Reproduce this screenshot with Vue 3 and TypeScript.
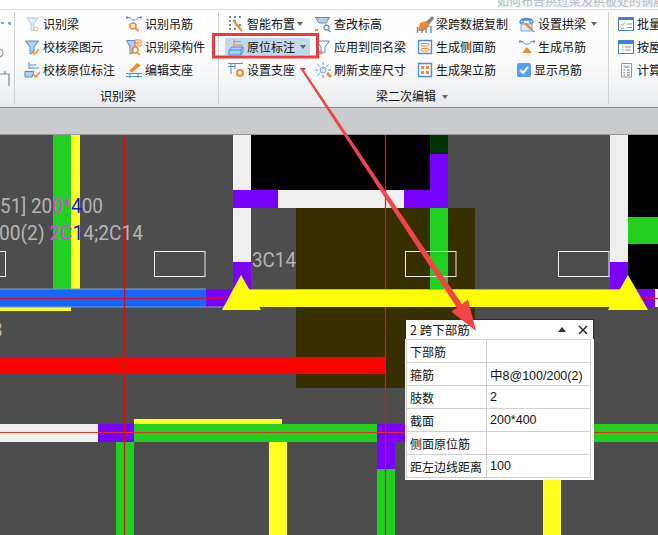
<template>
  <div class="app">
    <div class="top-strip">
      <span class="top-tip">如何布告拱过梁及拱板处的钢筋 ？</span>
    </div>

    <div class="ribbon">
      <div class="group group-cut">
        <svg class="cut-icon" width="13" height="74" viewBox="0 0 13 74">
          <path d="M1 7H4M8 7H10V9" fill="none" stroke="#4a8fd8" stroke-width="1.5" />
          <circle cx="-1" cy="37" r="4" fill="none" stroke="#9a9a9a" stroke-width="1.2" />
          <path d="M0 58H9V70M5 55V58" fill="none" stroke="#7a8a9a" stroke-width="1.2" />
        </svg>
      </div>

      <div class="group group-one">
        <div class="grid">
          <div v-for="item in groupOne" :key="item.label" class="item">
            <svg class="icon" width="16" height="16" viewBox="0 0 16 16">
              <path v-for="(p, i) in icons[item.icon]" :key="i" :d="p.d" :fill="p.f ?? 'none'" :stroke="p.s ?? 'none'" :stroke-width="p.w ?? 1" />
            </svg>
            <span>{{ item.label }}</span>
          </div>
        </div>
        <div class="group-label">识别梁</div>
      </div>

      <div class="group group-two">
        <div class="grid">
          <div
            v-for="item in groupTwo"
            :key="item.label"
            class="item"
            :class="{ active: item.active, compact: item.icon === 'checked' }"
          >
            <svg v-if="item.icon === 'checked'" class="icon" width="14" height="16" viewBox="0 0 14 16">
              <rect x="0" y="1" width="14" height="14" rx="2" fill="#55a0f5" />
              <path d="M3 8L6 11L11 5" fill="none" stroke="#fff" stroke-width="2" />
            </svg>
            <svg v-else class="icon" width="16" height="16" viewBox="0 0 16 16">
              <path v-for="(p, i) in icons[item.icon]" :key="i" :d="p.d" :fill="p.f ?? 'none'" :stroke="p.s ?? 'none'" :stroke-width="p.w ?? 1" />
            </svg>
            <span>{{ item.label }}</span>
            <i v-if="item.caret" class="caret"></i>
          </div>
        </div>
        <div class="group-label">梁二次编辑<i class="caret caret-label"></i></div>
      </div>

      <div class="group group-three">
        <div class="grid">
          <div v-for="item in groupThree" :key="item.label" class="item">
            <svg class="icon" width="16" height="16" viewBox="0 0 16 16">
              <path v-for="(p, i) in icons[item.icon]" :key="i" :d="p.d" :fill="p.f ?? 'none'" :stroke="p.s ?? 'none'" :stroke-width="p.w ?? 1" />
            </svg>
            <span>{{ item.label }}</span>
          </div>
        </div>
      </div>
    </div>

    <div class="band"></div>

    <svg class="drawing" width="658" height="400" viewBox="0 135 658 400">
      <rect
        v-for="(r, i) in members"
        :key="i"
        :x="r[0]"
        :y="r[1]"
        :width="r[2]"
        :height="r[3]"
        :fill="r[4]"
      />

      <rect v-for="x in [-45, 154.5, 405.5, 558.5]" :key="x" :x="x" y="251.5" width="50.5" height="25" fill="none" stroke="#eeeeee" stroke-width="1" />

      <path d="M0 289H206M0 307H233" stroke="#7aa0c8" stroke-width="1" />
      <path d="M0 298.5H225" stroke="#d81020" stroke-width="1.2" />
      <path d="M640 298.5H658" stroke="#e01010" stroke-width="1" />
      <path d="M0 432.5H658" stroke="#e03020" stroke-width="1" />
      <path d="M124.5 135V535" stroke="#d41010" stroke-width="1.2" />
      <path d="M385.5 135V535" stroke="#f01010" stroke-width="1.2" />

      <!-- the yellow beam sits on top of the axis lines -->
      <rect x="233" y="289" width="395" height="18" fill="#ffff00" />
      <path d="M233 289.5H628" stroke="#9fb4b8" stroke-width="1" />
      <path d="M241 275L222 310H261Z" fill="#ffff00" />
      <path d="M628 275L608 310H648Z" fill="#ffff00" />

      <text x="0" y="212.5" class="cad" textLength="103" lengthAdjust="spacingAndGlyphs">51] 20<tspan fill="#e040e0">0*</tspan><tspan fill="#1414d8">4</tspan>00</text>
      <text x="-1" y="240" class="cad" textLength="144" lengthAdjust="spacingAndGlyphs">00(2) <tspan fill="#e040e0">2C</tspan><tspan fill="#1414d8">1</tspan>4;2C14</text>
      <text x="252" y="266.5" class="cad" textLength="44" lengthAdjust="spacingAndGlyphs">3C14</text>
      <text x="-9" y="337" class="cad">3</text>
    </svg>

    <div class="popup">
      <div class="popup-title">
        <span>2 跨下部筋</span>
        <i class="popup-up"></i>
        <svg class="popup-close" width="10" height="10" viewBox="0 0 10 10">
          <path d="M1 1L9 9M9 1L1 9" stroke="#222" stroke-width="1.4" />
        </svg>
      </div>
      <table class="popup-table">
        <tbody>
          <tr v-for="row in rows" :key="row[0]">
            <td class="name">{{ row[0] }}</td>
            <td class="value">{{ row[1] }}</td>
          </tr>
        </tbody>
      </table>
    </div>

    <svg class="markup" width="658" height="535" viewBox="0 0 658 535">
      <rect x="213.5" y="34.5" width="104" height="22.5" fill="none" stroke="#ec3b3b" stroke-width="3" />
      <path d="M302 67.500L462 304.200L468 299.500L476 331L451 311.500L457 307.800L300.300 68.500Z" fill="#f24545" />
    </svg>
  </div>
</template>

<script setup lang="ts">
type Shape = { d: string; s?: string; f?: string; w?: number }
type Item = { label: string; icon: string; caret?: boolean; active?: boolean }

const BLUE = '#4a8fd8'
const ORANGE = '#f28a2e'
const PALE = '#b7cbe4'
const GREY = '#8b97a3'

const funnel = 'M1.5 2H14.5L10 8V13L6 15V8Z'
const lens = 'M9 11.5a2.5 2.5 0 1 0 5 0a2.5 2.5 0 1 0 -5 0M13 14L15.5 16'

const icons: Record<string, Shape[]> = {
  findBeam: [
    { d: 'M3 2H14L10 8V14L7 15V8Z', s: PALE, f: '#e4ecf5' },
    { d: 'M10 13a2 2 0 1 0 4 0a2 2 0 1 0 -4 0', s: '#f3b48a' },
  ],
  checkBeam: [
    { d: funnel, s: BLUE, f: PALE },
    { d: 'M8 12L10.5 15L15 10', s: ORANGE, w: 1.5 },
  ],
  checkMark: [
    { d: 'M5 0V7M5 3H12M5 6H15', s: BLUE },
    { d: 'M1 9.5H10L8 15H1Z', s: BLUE, f: '#a9cdf2' },
    { d: 'M9 12L11.5 15L16 10', s: ORANGE, w: 1.5 },
  ],
  findHanger: [
    { d: 'M0 1.5H4C4 5 12 5 12 1.5H16M1 0V3M15 0V3', s: BLUE },
    { d: 'M4 10a3 3 0 1 0 6 0a3 3 0 1 0 -6 0M9.5 12.5L13 15', s: ORANGE, w: 1.6 },
  ],
  findPart: [
    { d: 'M0.5 1.5H9V7L7 9V14L4 15V8Z', s: BLUE, f: PALE },
    { d: 'M9 1H15V7H9ZM11 3H13V5H11Z', s: ORANGE },
    { d: 'M6 11a3 3 0 1 0 6 0a3 3 0 1 0 -6 0M11 13.5L14 16', s: ORANGE, w: 1.5 },
  ],
  editSupport: [
    { d: 'M3 9L11 1L14.5 3.5L6 10.5Z', f: ORANGE },
    { d: 'M0 11.5H16M0 14.5H16M4 11V16M12 11V16', s: BLUE },
  ],
  smart: [
    { d: 'M1 1H3M6 1H8M1 5H3M6 5H8M11 1H13M1 9H3M1 13H3M6 13H8M11 9H13', s: BLUE, w: 2 },
    { d: 'M5 4L14 15', s: ORANGE, w: 2.2 },
  ],
  origin: [
    { d: 'M6 0V8M6 2.5H13M6 6H15', s: ORANGE },
    { d: 'M1 11L4 8H15L13 11ZM1 11V16H13V11M13 16L15 13V8', s: BLUE, f: '#a9cdf2' },
  ],
  support: [
    { d: 'M0 1.5H15M3 1.5V12M7 1.5V7M0 4.5H7', s: BLUE },
    { d: 'M9 11a3 3 0 1 0 6 0a3 3 0 1 0 -6 0', s: ORANGE, w: 2.2 },
  ],
  elevation: [
    { d: 'M0.5 1.5H14.5L11 7H4Z', s: BLUE, f: PALE },
    { d: lens, s: '#6b8fb5', w: 1.4 },
    { d: 'M0 14H3', s: ORANGE, w: 2 },
  ],
  sameName: [
    { d: funnel, s: BLUE, f: '#fff' },
    { d: 'M1 12H8L4.5 16Z', f: ORANGE },
  ],
  refresh: [
    { d: 'M8 0V3M8 13V16M0 8H3M13 8H16M2.5 2.5L4.5 4.5M13.5 2.5L11.5 4.5M2.5 13.5L4.5 11.5', s: BLUE },
    { d: 'M5 8a3 3 0 1 0 6 0a3 3 0 1 0 -6 0', s: '#7da7d3', f: '#dbe8f6' },
    { d: 'M12 11L16 15', s: ORANGE, w: 3 },
  ],
  copyData: [
    { d: 'M9 6L15 0L17 2L12 9Z', f: '#7f8790' },
    { d: 'M3 7L9 5L13 10L6 15H1Z', f: ORANGE },
    { d: 'M0.5 17V11M5 17V12M9 17V12M14 17V10', s: BLUE, w: 1.4 },
  ],
  sideBar: [
    { d: 'M1.5 1.5H14.5V14.5H1.5Z', s: BLUE, w: 1.4 },
    { d: 'M5 4.5H11C12.5 4.5 12.5 7 11 7H5C3.5 7 3.5 4.5 5 4.5ZM5 9.5H11C12.5 9.5 12.5 12 11 12H5C3.5 12 3.5 9.5 5 9.5Z', s: ORANGE },
  ],
  frameBar: [
    { d: 'M1.5 1.5H14.5V14.5H1.5Z', s: BLUE, w: 1.4 },
    { d: 'M4 4H7V7H4ZM9 4H12V7H9ZM4 9H7V12H4ZM9 9H12V12H9Z', f: ORANGE },
  ],
  arch: [
    { d: 'M1 7C0 1 15 1 14 7M1 7H4V4H11V7H14', s: BLUE, w: 1.5 },
    { d: 'M2 8H13V15H2Z', s: '#7da7d3', f: '#dbe8f6' },
    { d: 'M6 7L12 13', s: ORANGE, w: 2.4 },
    { d: 'M12 13L15 16', s: GREY, w: 1.4 },
  ],
  makeHanger: [
    { d: 'M0 2.5H4C4 6 12 6 12 2.5H16M1 1V4M15 1V4', s: BLUE },
    { d: 'M8 8L13 14H3Z', f: ORANGE },
  ],
  batch: [
    { d: 'M0.5 1.5H15.5V14.5H0.5Z', s: '#3f82cf', f: '#fff' },
    { d: 'M0.5 1H15.5V4H0.5Z', f: '#3f82cf' },
    { d: 'M3 8L4.5 9.5L7 6.5M3 12L4.5 13L6 11', s: ORANGE },
    { d: 'M8.5 8H14M8.5 11.5H14', s: GREY },
  ],
  byFloor: [
    { d: 'M0.5 1.5H15.5V14.5H0.5Z', s: '#3f82cf', f: '#fff' },
    { d: 'M0.5 1H15.5V5H0.5Z', f: '#3f82cf' },
    { d: 'M4 8H5.5M4 11H5.5M7 8H13M7 11H13', s: GREY },
  ],
  calc: [
    { d: 'M3.5 1.5H13.5V15H3.5Z', s: GREY, f: '#fff' },
    { d: 'M5.5 3.5H11.5V6H5.5Z', f: '#9fc1e4' },
    { d: 'M5.5 8H7M9 8H11.5M5.5 10.5H7M9 10.5H11.5M5.5 13H7M9 13H11.5', s: GREY, w: 1.4 },
  ],
}

const groupOne: Item[] = [
  { label: '识别梁', icon: 'findBeam' },
  { label: '识别吊筋', icon: 'findHanger' },
  { label: '校核梁图元', icon: 'checkBeam' },
  { label: '识别梁构件', icon: 'findPart' },
  { label: '校核原位标注', icon: 'checkMark' },
  { label: '编辑支座', icon: 'editSupport' },
]

const groupTwo: Item[] = [
  { label: '智能布置', icon: 'smart', caret: true },
  { label: '查改标高', icon: 'elevation' },
  { label: '梁跨数据复制', icon: 'copyData' },
  { label: '设置拱梁', icon: 'arch', caret: true },
  { label: '原位标注', icon: 'origin', caret: true, active: true },
  { label: '应用到同名梁', icon: 'sameName' },
  { label: '生成侧面筋', icon: 'sideBar' },
  { label: '生成吊筋', icon: 'makeHanger' },
  { label: '设置支座', icon: 'support', caret: true },
  { label: '刷新支座尺寸', icon: 'refresh' },
  { label: '生成架立筋', icon: 'frameBar' },
  { label: '显示吊筋', icon: 'checked' },
]

const groupThree: Item[] = [
  { label: '批量选择', icon: 'batch' },
  { label: '按屋面层', icon: 'byFloor' },
  { label: '计算设置', icon: 'calc' },
]

const PURPLE = '#7a00ff'
const GREEN = '#20cf20'
const PALE_YELLOW = '#ffff22'
const WHITE = '#efefef'
const OLIVE = '#363000'

// x, y, width, height, fill
const members: [number, number, number, number, string][] = [
  [53, 135, 18, 154, GREEN],
  [71, 135, 9, 154, PALE_YELLOW],
  [251, 135, 179, 55, '#000000'],
  [430, 135, 18, 19, '#003300'],
  [430, 154, 18, 54, PURPLE],
  [233, 135, 18, 127, WHITE],
  [278, 190, 126, 18, WHITE],
  [233, 190, 45, 18, PURPLE],
  [404, 190, 44, 18, PURPLE],
  [296, 208, 179, 180, OLIVE],
  [430, 208, 18, 81, GREEN],
  [233, 262, 18, 27, PURPLE],
  [610, 135, 18, 127, WHITE],
  [628, 135, 30, 154, '#000000'],
  [628, 217, 30, 27, GREEN],
  [610, 262, 18, 27, PURPLE],
  [628, 289, 27, 18, PURPLE],
  [655, 289, 3, 18, WHITE],
  [0, 289, 206, 18, '#1466ff'],
  [206, 289, 27, 18, PURPLE],
  [0, 307, 71, 4, PALE_YELLOW],
  [0, 357, 385, 17, '#ff0000'],
  [134, 419, 148, 5, PALE_YELLOW],
  [0, 424, 98, 18, WHITE],
  [98, 424, 36, 18, PURPLE],
  [134, 424, 243, 18, GREEN],
  [377, 424, 36, 18, PURPLE],
  [413, 424, 245, 18, GREEN],
  [116, 442, 18, 93, GREEN],
  [269, 442, 18, 93, PALE_YELLOW],
  [377, 442, 18, 27, PURPLE],
  [377, 469, 18, 66, GREEN],
  [543, 470, 18, 65, PALE_YELLOW],
]

const rows: [string, string][] = [
  ['下部筋', ''],
  ['箍筋', '中8@100/200(2)'],
  ['肢数', '2'],
  ['截面', '200*400'],
  ['侧面原位筋', ''],
  ['距左边线距离', '100'],
]
</script>

<style>
html,
body {
  margin: 0;
  background: #4d4d4d;
}
</style>

<style scoped>
.app {
  position: relative;
  width: 658px;
  height: 535px;
  overflow: hidden;
  display: flex;
  flex-direction: column;
  background: #4d4d4d;
  font-family: "Noto Sans CJK SC", "Liberation Sans", sans-serif;
  font-size: 12px;
  color: #111;
}

.top-strip {
  height: 9px;
  flex: none;
  background: #fff;
  border-bottom: 1px solid #d8d8d8;
  overflow: hidden;
  display: flex;
  justify-content: flex-end;
}

.top-tip {
  margin-top: -7px;
  width: 161px;
  height: 15px;
  line-height: 15px;
  white-space: nowrap;
  overflow: hidden;
  color: #b4bac2;
  background: #f4f5f6;
}

.ribbon {
  height: 97px;
  flex: none;
  display: flex;
  background: linear-gradient(#ffffff 0%, #fbfbfc 55%, #e9ebec 100%);
  border-bottom: 1px solid #8c8c8c;
}

.group {
  height: 92px;
  margin-top: 2px;
  padding-left: 6px;
  box-sizing: border-box;
  flex: none;
  border-right: 1px solid #cfd2d5;
}

.group-cut {
  width: 15px;
  padding: 0;
  overflow: hidden;
}

.cut-icon {
  display: block;
  margin-top: 4px;
}

.group-one {
  width: 204px;
}

.group-two {
  width: 390px;
}

.group-three {
  flex: 1;
  min-width: 0;
  border-right: none;
  overflow: hidden;
}

.grid {
  display: grid;
  grid-auto-rows: 23px;
  align-items: center;
}

.group-one .grid {
  grid-template-columns: 102px 96px;
}

.group-two .grid {
  grid-template-columns: 87px 102px 102px 90px;
}

.group-three .grid {
  grid-template-columns: 1fr;
}

.item {
  display: flex;
  align-items: center;
  height: 17px;
  padding-left: 3px;
  white-space: nowrap;
}

.item .icon {
  flex: none;
  overflow: visible;
  margin-right: 3px;
}

.item.compact {
  padding-left: 1px;
}

.item.active {
  width: 85px;
  box-sizing: border-box;
  background: #c5d6ef;
}

.caret {
  display: inline-block;
  width: 0;
  height: 0;
  margin-left: 5px;
  border-left: 3.5px solid transparent;
  border-right: 3.5px solid transparent;
  border-top: 4px solid #666;
}

.item:first-child .caret {
  margin-left: 2px;
}

.group-label {
  margin-top: 6px;
  text-align: center;
  line-height: 18px;
}

.group-one .group-label {
  margin-left: 8px;
  padding-right: 11px;
}

.group-two .group-label {
  padding-right: 9px;
}

.caret-label {
  margin-left: 6px;
  vertical-align: 2px;
}

.band {
  height: 26px;
  flex: none;
  background: #c9cbcf;
  border-bottom: 1px solid #9a9a9a;
}

.drawing {
  display: block;
  flex: none;
}

.cad {
  font-family: "Roboto", "Liberation Sans", sans-serif;
  font-size: 21px;
  fill: #b4b4b4;
}

.popup {
  position: absolute;
  left: 405px;
  top: 319px;
  width: 189px;
  height: 161px;
  background: #fff;
}

.popup-title {
  height: 20px;
  box-sizing: border-box;
  display: flex;
  align-items: center;
  padding-left: 4px;
  border: 1px solid #2c2c2c;
  border-bottom: none;
  font-size: 12.5px;
}

.popup-title span {
  flex: 1;
}

.popup-up {
  width: 0;
  height: 0;
  margin-right: 12px;
  border-left: 4px solid transparent;
  border-right: 4px solid transparent;
  border-bottom: 5px solid #333;
}

.popup-close {
  margin-right: 5px;
}

.popup-table {
  margin-left: 1px;
  width: 185px;
  table-layout: fixed;
  border-collapse: collapse;
}

.popup-table td {
  height: 23px;
  padding: 0 0 0 3px;
  border: 1px solid #d0d0d0;
  white-space: nowrap;
  overflow: hidden;
  box-sizing: border-box;
}

.popup-table .name {
  width: 80px;
}

.popup-table .value {
  font-family: "Liberation Sans", "Noto Sans CJK SC", sans-serif;
  font-size: 12.5px;
}

.markup {
  position: absolute;
  left: 0;
  top: 0;
  pointer-events: none;
}
</style>
